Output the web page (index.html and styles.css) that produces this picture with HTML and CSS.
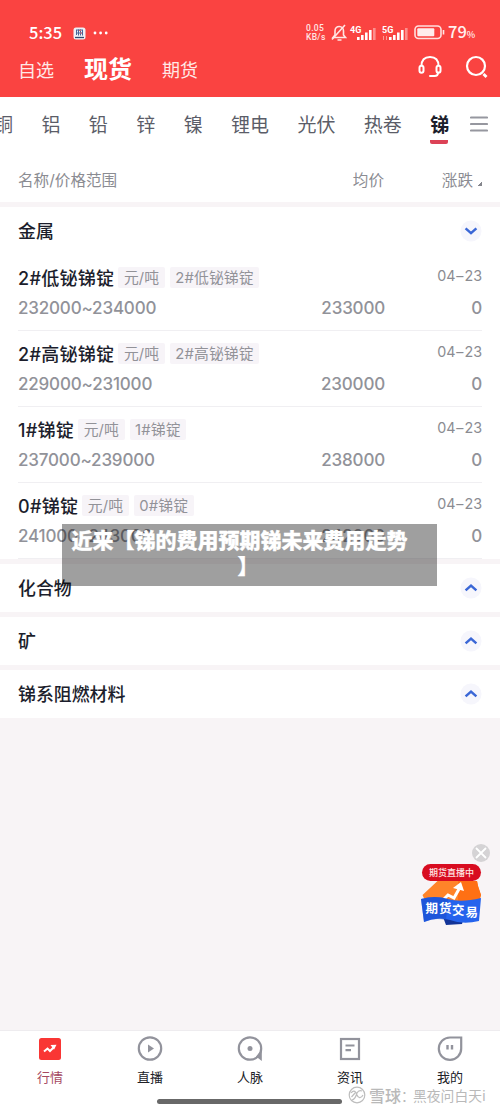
FILE: index.html
```html
<!DOCTYPE html>
<html lang="zh-CN">
<head>
<meta charset="utf-8">
<title>现货行情</title>
<link rel="stylesheet" href="styles.css">
</head>
<body>
<div class="app">
  <header class="top">
    <div class="status">
      <span class="time">5:35</span>
      <svg class="app-dot" width="13" height="13" viewBox="0 0 13 13"><rect x=".5" y=".5" width="12" height="12" rx="2.5" fill="#eef0f5"/><path d="M3.5 3v5M5.5 2.5v6M7.5 2.5v6M9.5 3v5.5M3 3h7M3.5 6h6" stroke="#496698" fill="none"/><path d="M6 3.5h2M7 6h2" stroke="#d8606c"/><path d="M2 10.5h9" stroke="#33496f" stroke-width="1.3"/></svg>
      <svg class="dots" width="16" height="4" viewBox="0 0 16 4" fill="#fff"><circle cx="2" cy="2" r="1.4"/><circle cx="7.6" cy="2" r="1.4"/><circle cx="13.2" cy="2" r="1.4"/></svg>
      <span class="speed"><span>0.05</span><span>KB/s</span></span>
      <svg class="bell" width="16" height="18" viewBox="0 0 16 18" fill="none" stroke="#ffe6e4" stroke-width="1.6"><path d="M2 13.5 4 11V7c0-3 2-4.500 4.300-4.500S12.500 4.500 12.500 7v4l2 2.500z"/><path d="M1 15.500 14 1M6.500 16h4"/></svg>
      <svg class="signal" width="27" height="17" viewBox="0 0 27 17"><text x="0" y="7.500" class="net">4G</text><g fill="#fff"><rect x="7" y="12" width="2.600" height="3"/><rect x="11" y="10" width="2.600" height="5"/><rect x="15" y="7.500" width="2.600" height="7.500"/><rect x="19" y="5" width="2.600" height="10"/><rect x="23" y="3" width="2.600" height="12" opacity=".4"/></g></svg>
      <svg class="signal second" width="27" height="17" viewBox="0 0 27 17"><text x="0" y="7.500" class="net">5G</text><path d="M1.500 11v4M4.500 11v4" stroke="#fff" opacity=".45"/><g fill="#fff"><rect x="7" y="12" width="2.600" height="3"/><rect x="11" y="10" width="2.600" height="5"/><rect x="15" y="7.500" width="2.600" height="7.500"/><rect x="19" y="5" width="2.600" height="10"/><rect x="23" y="3" width="2.600" height="12" opacity=".4"/></g></svg>
      <svg class="battery" width="31" height="15" viewBox="0 0 31 15"><rect x="1" y="1" width="26" height="12.500" rx="3.500" fill="none" stroke="#ffe0de" stroke-width="1.600"/><rect x="3.300" y="3.300" width="17" height="8" rx="1" fill="#ffecec"/><path d="M29.500 5v4.500" stroke="#ffe6e4" stroke-width="1.600"/></svg>
      <span class="percent">79<small>%</small></span>
    </div>
    <nav class="main-tabs">
      <span class="main-tab">自选</span>
      <span class="main-tab current">现货</span>
      <span class="main-tab">期货</span>
      <svg class="headset" width="24" height="24" viewBox="0 0 24 24" fill="none" stroke="#fff" stroke-width="2"><path d="M3.500 11C3.500 5 7 2 12 2s8.500 3 8.500 9"/><rect x="1.500" y="10.800" width="4" height="7" rx="2"/><rect x="18.500" y="10.800" width="4" height="7" rx="2"/><path d="M20 17.500c0 2.500-1.500 3.500-3.500 3.500H12" stroke-linecap="round"/></svg>
      <svg class="search" width="24" height="24" viewBox="0 0 24 24" fill="none" stroke="#fff" stroke-width="2.200"><circle cx="11" cy="11" r="9"/><path d="m18.500 19 3 3" stroke-width="2.800"/></svg>
    </nav>
  </header>

  <nav class="metals">
    <span>铜</span><span>铝</span><span>铅</span><span>锌</span><span>镍</span><span>锂电</span><span>光伏</span><span>热卷</span><span class="active">锑</span>
    <svg class="menu" width="18" height="16" viewBox="0 0 18 16"><path d="M1 1.500h16M1 8h16M1 14.500h16" stroke="#96979f" stroke-width="2.200" stroke-linecap="round"/></svg>
  </nav>

  <div class="columns">
    <span class="col-name">名称/价格范围</span><span class="col-avg">均价</span><span class="col-change">涨跌<i class="sort"></i></span>
  </div>

  <section class="group">
    <div class="group-head"><span>金属</span><svg class="chevron" width="22" height="22" viewBox="0 0 22 22"><circle cx="11" cy="11" r="10.500" fill="#f6f6fc"/><path d="m5.600 8.400 5.400 4.800 5.400-4.800" fill="none" stroke="#3a67d6" stroke-width="2.500"/></svg></div>
    <div class="rows">
      <article class="row">
        <div class="line"><b>2#低铋锑锭</b><span class="tag">元/吨</span><span class="tag">2#低铋锑锭</span><time>04<i>–</i>23</time></div>
        <div class="prices"><span class="range">232000~234000</span><span class="avg">233000</span><span class="delta">0</span></div>
      </article>
      <article class="row">
        <div class="line"><b>2#高铋锑锭</b><span class="tag">元/吨</span><span class="tag">2#高铋锑锭</span><time>04<i>–</i>23</time></div>
        <div class="prices"><span class="range">229000~231000</span><span class="avg">230000</span><span class="delta">0</span></div>
      </article>
      <article class="row">
        <div class="line"><b>1#锑锭</b><span class="tag">元/吨</span><span class="tag">1#锑锭</span><time>04<i>–</i>23</time></div>
        <div class="prices"><span class="range">237000~239000</span><span class="avg">238000</span><span class="delta">0</span></div>
      </article>
      <article class="row">
        <div class="line"><b>0#锑锭</b><span class="tag">元/吨</span><span class="tag">0#锑锭</span><time>04<i>–</i>23</time></div>
        <div class="prices"><span class="range">241000~243000</span><span class="avg">242000</span><span class="delta">0</span></div>
      </article>
    </div>
  </section>
  <section class="group"><div class="group-head"><span>化合物</span><svg class="chevron" width="22" height="22" viewBox="0 0 22 22"><circle cx="11" cy="11" r="10.500" fill="#f6f6fc"/><path d="m5.600 13.400 5.400-4.800 5.400 4.800" fill="none" stroke="#3a67d6" stroke-width="2.500"/></svg></div></section>
  <section class="group"><div class="group-head"><span>矿</span><svg class="chevron" width="22" height="22" viewBox="0 0 22 22"><circle cx="11" cy="11" r="10.500" fill="#f6f6fc"/><path d="m5.600 13.400 5.400-4.800 5.400 4.800" fill="none" stroke="#3a67d6" stroke-width="2.500"/></svg></div></section>
  <section class="group"><div class="group-head"><span>锑系阻燃材料</span><svg class="chevron" width="22" height="22" viewBox="0 0 22 22"><circle cx="11" cy="11" r="10.500" fill="#f6f6fc"/><path d="m5.600 13.400 5.400-4.800 5.400 4.800" fill="none" stroke="#3a67d6" stroke-width="2.500"/></svg></div></section>

  <footer class="bottom">
    <div class="item selected"><svg width="26" height="26" viewBox="0 0 26 26"><rect x="2" y="2" width="22" height="22" rx="2.500" fill="#f93634"/><path d="m7 15.500 3.500-3 2.500 2.500 4-4" fill="none" stroke="#fff" stroke-width="2"/><path d="m13.500 9 6-.2-2.500 5z" fill="#fff"/></svg><span>行情</span></div>
    <div class="item"><svg width="26" height="26" viewBox="0 0 26 26"><circle cx="13" cy="12.500" r="11.200" fill="none" stroke="#92939c" stroke-width="2.200"/><path d="m11 8.500 6 4-6 4z" fill="#92939c"/></svg><span>直播</span></div>
    <div class="item"><svg width="26" height="26" viewBox="0 0 26 26"><circle cx="13" cy="12.500" r="11.200" fill="none" stroke="#92939c" stroke-width="2.200"/><path d="M19 20.500 24.800 14v11z" fill="#92939c"/><circle cx="13" cy="12.500" r="2.500" fill="#92939c"/></svg><span>人脉</span></div>
    <div class="item"><svg width="26" height="26" viewBox="0 0 26 26" fill="none" stroke="#92939c" stroke-width="2.200"><rect x="4" y="3" width="18" height="20"/><path d="M8.500 9.500h9M8.500 14.200h5.500"/></svg><span>资讯</span></div>
    <div class="item"><svg width="26" height="26" viewBox="0 0 26 26" fill="none" stroke="#92939c" stroke-width="2.200"><path d="M13 1.500h11.200v11A11.200 11.200 0 1 1 13 1.500z"/><path d="M10.500 9v4.500M15 9v4.500" stroke-width="2.400"/></svg><span>我的</span></div>
  </footer>

  <div class="caption"><div>近来【锑的费用预期锑未来费用走势</div><div class="caption-end">】</div></div>

  <svg class="promo" width="80" height="90" viewBox="0 0 80 90">
    <circle cx="61" cy="13" r="9" fill="#d5d3d5"/><path d="m56 8 10 10M66 8 56 18" stroke="#fff" stroke-width="1.800"/>
    <path d="m2.500 55 15-14H57l1 5 3 9-3 12H8z" fill="#ff8429"/><path d="M38 41h19l1 5 3 9-3 9-20 2z" fill="#ff7014"/>
    <path d="m21 62 7-7 6 3 5-9" fill="none" stroke="#fff" stroke-width="3"/><path d="m33 48 8-6 3 9z" fill="#fff"/>
    <path d="M23 77h21l-2 7-16 1z" fill="#123397"/><path d="M1 59q14-4 27 0t33-1l-2 23q-16 4-29-1-13-4-26 2z" fill="#2563ed"/><path d="M1 59q14-4 27 0l-2 21q-12-3-22 2z" fill="#1749c8" opacity=".5"/>
    <rect x="2" y="24" width="59" height="17" rx="8.500" fill="#d80c20"/>
    <text x="31.500" y="36" class="live" text-anchor="middle">期货直播中</text>
    <text class="trade" x="5.500 19 32 45.500" y="73 73 75 77">期货交易</text>
  </svg>

  <div class="home-bar"></div>
  <div class="watermark"><svg width="18" height="18" viewBox="0 0 18 18" fill="none" stroke="#bdbdbd" stroke-width="1.200"><circle cx="9" cy="9" r="7.800"/><path d="M3 7c3-4 5-1 6 2s4 4 6 0M4 14c4-1 4-5 5-7s3-3 5-2M3.500 11 7 7"/></svg><b>雪球</b><span class="colon">：</span><span>黑夜问白天i</span></div>
</div>
</body>
</html>
```
FILE: styles.css
```css
* { box-sizing: border-box; }
body { margin: 0; }
i { font-style: normal; }
svg { display: block; flex: none; }
.app {
  position: relative;
  display: flex;
  flex-direction: column;
  width: 500px;
  height: 1111px;
  overflow: hidden;
  background: #f8f4f6;
  color: #1c1e2c;
  font-family: Inter, "Noto Sans CJK SC", sans-serif;
  white-space: nowrap;
}
.top { height: 97px; padding-top: 21px; background: #fa4341; color: #fff; flex: none; }
.status { display: flex; align-items: center; height: 24px; padding-left: 29px; }
.time { width: 44px; margin-top: -2px; font: 500 16.5px/24px "Noto Sans CJK SC", sans-serif; }
.dots { margin-left: 7px; }
.speed { display: flex; flex-direction: column; width: 21px; margin-left: 197px; font: 500 8.5px/9px Roboto, sans-serif; letter-spacing: .3px; color: #ffe6e4; }
.bell { margin-left: 4px; }
.signal { margin-left: 3px; overflow: visible; }
.second { margin-left: 5px; }
.net { font: 700 9px Roboto, sans-serif; fill: #fff; }
.battery { margin: -1px 0 0 5px; }
.percent { margin-left: 3px; font: 500 16.5px/24px "Noto Sans CJK SC", sans-serif; color: #fff0ef; }
.percent small { font-size: 9px; }
.main-tabs { display: flex; align-items: center; height: 48px; padding: 2px 0 0 18px; }
.main-tab { width: 66px; padding-top: 2px; font-size: 18px; line-height: 26px; color: #ffe9e7; }
.current { width: 78px; padding-top: 0; font-size: 24px; font-weight: 700; color: #fff; }
.headset { margin: -7px 0 0 190px; }
.search { margin: -6px 0 0 23px; }
.metals {
  display: flex;
  height: 58px;
  padding-top: 16px;
  background: #fff;
  color: #5b5d68;
  font-size: 19px;
  line-height: 26px;
  gap: 28.4px;
  flex: none;
}
.metals > span:first-child { margin-left: -6px; }
.metals .active { display: flex; flex-direction: column; width: 18px; height: 31px; border-bottom: 4px solid #dc4256; border-radius: 2px; color: #1c1e2c; font-weight: 700; }
.menu { margin: 3px 0 0 -7px; }
.columns { display: flex; flex: none; height: 47px; padding: 15px 18px 0; background: #fff; color: #8b8c92; font-size: 15.6px; line-height: 22px; }
.col-name { width: 335px; }
.col-avg { width: 89px; }
.col-change { display: flex; }
.sort { width: 5px; height: 5px; margin: 11px 0 0 4px; background: linear-gradient(135deg, transparent 50%, #85868d 50%); }
.group { flex: none; margin-top: 5px; background: #fff; }
.group-head { display: flex; justify-content: space-between; align-items: center; height: 48px; padding: 0 18px; font-size: 17.9px; font-weight: 500; line-height: 26px; }
.group-head span { padding-top: 2px; }
.rows { padding: 0 18px; }
.row { height: 76px; padding-top: 11px; border-bottom: 1.500px solid #f0eff2; }
.line { display: flex; align-items: center; height: 22px; }
.line b { font-size: 18px; font-weight: 500; letter-spacing: .3px; margin-right: 4px; }
.tag { height: 21px; padding: 0 5.500px; margin-right: 5px; border-radius: 2px; background: #f7f4f8; color: #929298; font-size: 14.800px; line-height: 22px; letter-spacing: .15px; }
.line time { display: flex; margin-left: auto; margin-top: -3px; color: #8b8c92; font-size: 14.300px; }
.line time i { width: 9px; text-align: center; }
.prices { display: grid; grid-template-columns: 1fr 80px 97px; margin-top: 9px; color: #919299; font-size: 17px; font-weight: 500; line-height: 22px; letter-spacing: -.18px; }
.avg, .delta { text-align: right; }
.bottom { display: flex; margin-top: auto; height: 81px; padding-top: 5px; border-top: 1px solid #eeecef; background: #fff; flex: none; }
.item { display: flex; flex-direction: column; align-items: center; width: 100px; font-size: 13px; line-height: 20px; gap: 5px; }
.item span { color: #202127; }
.selected span { color: #a54861; }
.caption {
  position: absolute;
  left: 62px;
  top: 524px;
  width: 375px;
  height: 62px;
  padding: 2px 0 0 9.500px;
  background: rgba(0, 0, 0, .375);
  color: #fff;
  font: 900 21px/26px "Noto Sans CJK SC", sans-serif;
  -webkit-text-stroke: .3px #fff;
}
.caption-end { padding-left: 166px; }
.promo { position: absolute; left: 420px; top: 840px; }
.live { font: 500 9px "Noto Sans CJK SC", sans-serif; fill: #ffe7e4; }
.trade { font: 700 12.500px "Noto Sans CJK SC", sans-serif; fill: #fff; }
.home-bar { position: absolute; left: 157px; top: 1099px; width: 185px; height: 5px; border-radius: 3px; background: #686868; }
.watermark { position: absolute; left: 348px; top: 1085px; display: flex; align-items: center; height: 20px; color: #b9b9b9; font: 400 13.800px/20px "Noto Sans CJK SC", sans-serif; }
.watermark b { margin-left: 3px; font-size: 16px; font-weight: 500; }
.colon { width: 12px; }
```
